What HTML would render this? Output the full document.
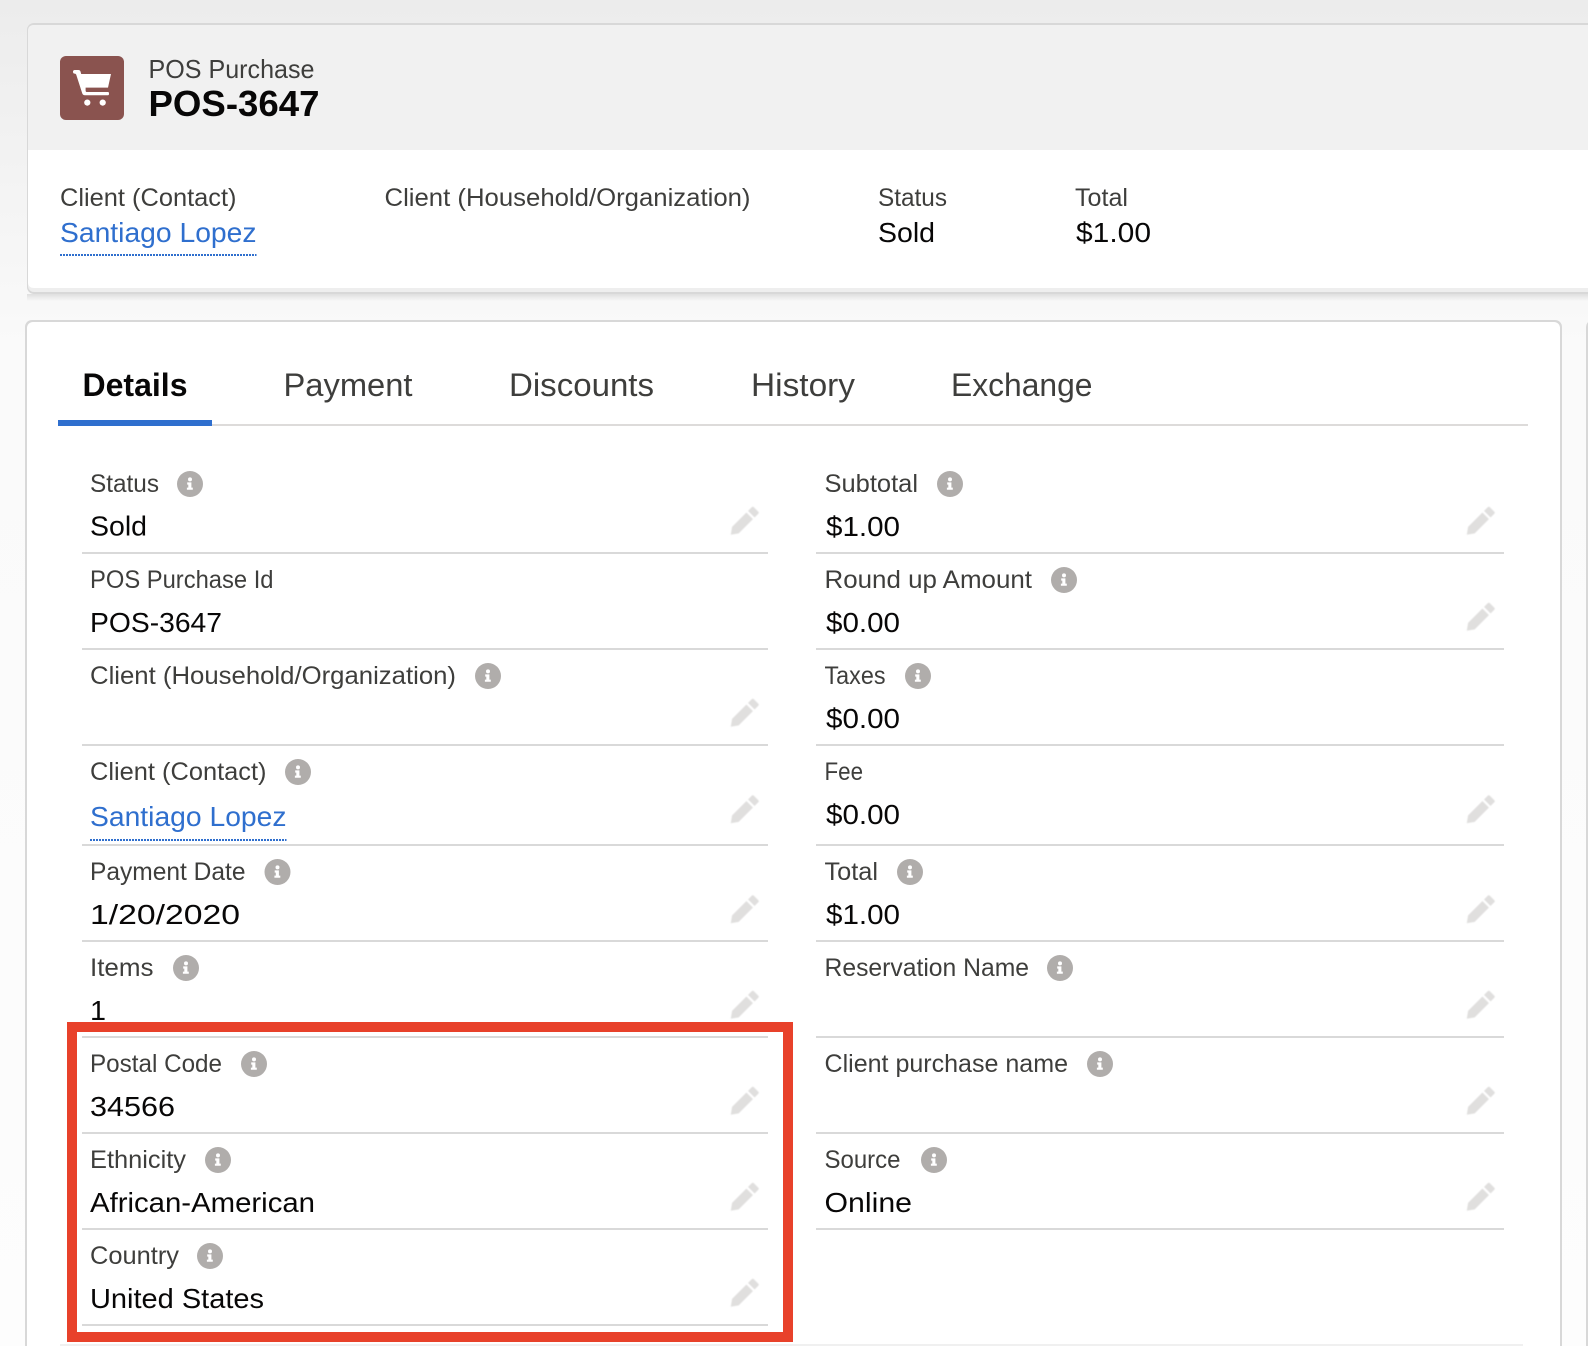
<!DOCTYPE html>
<html lang="en">
<head>
<meta charset="utf-8">
<title>POS Purchase POS-3647</title>
<style>
html,body{margin:0;padding:0;background:#fff;width:1588px;height:1346px;overflow:hidden}
svg{display:block}
text{font-family:"Liberation Sans",sans-serif;white-space:pre}
.l{font-size:25px;fill:#3e3e3c}
.v{font-size:28px;fill:#080707}
.a{font-size:28px;fill:#2f6fce}
.t{font-size:32px;fill:#3e3e3c}
.r{fill:#d9d9d9}
</style>
</head>
<body>
<svg width="1588" height="1346" viewBox="0 0 1588 1346" xmlns="http://www.w3.org/2000/svg">
<defs>
<linearGradient id="bg" x1="0" y1="0" x2="0" y2="1">
<stop offset="0" stop-color="#ececec"/><stop offset=".26" stop-color="#fafafa"/><stop offset="1" stop-color="#fdfdfd"/>
</linearGradient>
<linearGradient id="sh" x1="0" y1="0" x2="0" y2="1">
<stop offset="0" stop-color="#cfcfcf" stop-opacity=".6"/><stop offset="1" stop-color="#cfcfcf" stop-opacity="0"/>
</linearGradient>
<filter id="soft" x="-10%" y="-10%" width="120%" height="120%"><feGaussianBlur stdDeviation=".45"/></filter>
<g id="i">
<circle r="13" fill="#b0adab"/>
<circle cx="0" cy="-4.6" r="2" fill="#fff"/>
<path d="M-2.8 -1.6h4.2v5.2h1.4v2.2h-5.9v-2.2h1.4v-3h-1.1z" fill="#fff"/>
</g>
<g id="p" fill="#e0dfde" transform="rotate(-45) scale(.92)" filter="url(#soft)">
<path d="M-19.5 0l7-5h22v10h-22z"/>
<path d="M12 -5h5.700q1.600 0 1.600 1.600v6.800q0 1.600-1.600 1.600h-5.700z"/>
</g>
</defs>

<rect width="1588" height="1346" fill="url(#bg)"/>

<!-- header card -->
<rect x="27" y="294" width="1561" height="7" fill="url(#sh)"/>
<rect x="27" y="23" width="1600" height="271" rx="7" fill="#d8d8d8"/>
<rect x="28" y="25" width="1600" height="267" rx="6" fill="#eeeeee"/>
<path d="M28 31q0-6 6-6H1588v125H28z" fill="#f1f1f1"/>
<path d="M28 150h1560v138H34q-6 0-6-6z" fill="#fff"/>

<rect x="60" y="56" width="64" height="64" rx="6" fill="#8a534f"/>
<path d="M75.300 70h3.100q1.600 0 2.100 1.500l.7 2.500h29.800l-3 13.600H85.600v3q0 1.400 1.400 1.400h21q1 0 1 1.600t-1 1.600H85q-2.200 0-2.800-2l-6-18.600q-.4-1-1.500-1h-.2q-1.500 0-1.500-1.800t1.800-1.800z" fill="#fff"/>
<circle cx="87.300" cy="102.600" r="3.100" fill="#fff"/>
<circle cx="102.700" cy="102.600" r="3.100" fill="#fff"/>

<text x="148.500" y="78" font-size="26" fill="#3e3e3c" textLength="166" lengthAdjust="spacingAndGlyphs">POS Purchase</text>
<text x="148.500" y="116" font-size="36" font-weight="700" fill="#080707" textLength="171" lengthAdjust="spacingAndGlyphs">POS-3647</text>

<text class="l" x="60" y="206" textLength="176.500" lengthAdjust="spacingAndGlyphs">Client (Contact)</text>
<text class="l" x="384.500" y="206" textLength="366" lengthAdjust="spacingAndGlyphs">Client (Household/Organization)</text>
<text class="l" x="878" y="206" textLength="69" lengthAdjust="spacingAndGlyphs">Status</text>
<text class="l" x="1075" y="206" textLength="53" lengthAdjust="spacingAndGlyphs">Total</text>
<text class="a" x="60" y="242" textLength="196.500" lengthAdjust="spacingAndGlyphs">Santiago Lopez</text>
<line x1="60" y1="255" x2="256.500" y2="255" stroke="#2f6fce" stroke-width="2" stroke-dasharray="2 1"/>
<text class="v" x="878" y="242" textLength="57" lengthAdjust="spacingAndGlyphs">Sold</text>
<text class="v" x="1076" y="242" textLength="75" lengthAdjust="spacingAndGlyphs">$1.00</text>

<!-- main panel -->
<rect x="25" y="320" width="1537" height="1040" rx="7" fill="#d8d8d8"/>
<rect x="27" y="322" width="1533" height="1040" rx="6" fill="#fff"/>
<rect x="1586" y="321" width="10" height="1030" rx="6" fill="#d8d8d8"/>
<rect x="1588" y="323" width="10" height="1030" rx="6" fill="#fff"/>
<rect x="60" y="1344" width="1463" height="2" fill="#f0f0f0"/>

<!-- tabs -->
<rect x="58" y="424" width="1470" height="2" fill="#dddbda"/>
<rect x="58" y="420" width="154" height="6" fill="#2f6fce"/>
<text x="82.500" y="396" font-size="32" font-weight="700" fill="#080707" textLength="105" lengthAdjust="spacingAndGlyphs">Details</text>
<text class="t" x="283.500" y="396" textLength="129" lengthAdjust="spacingAndGlyphs">Payment</text>
<text class="t" x="509" y="396" textLength="145" lengthAdjust="spacingAndGlyphs">Discounts</text>
<text class="t" x="751" y="396" textLength="104" lengthAdjust="spacingAndGlyphs">History</text>
<text class="t" x="951" y="396" textLength="141.500" lengthAdjust="spacingAndGlyphs">Exchange</text>

<!-- rules -->
<g class="r">
<rect x="82" y="552" width="686" height="2"/><rect x="816" y="552" width="688" height="2"/>
<rect x="82" y="648" width="686" height="2"/><rect x="816" y="648" width="688" height="2"/>
<rect x="82" y="744" width="686" height="2"/><rect x="816" y="744" width="688" height="2"/>
<rect x="82" y="844" width="686" height="2"/><rect x="816" y="844" width="688" height="2"/>
<rect x="82" y="940" width="686" height="2"/><rect x="816" y="940" width="688" height="2"/>
<rect x="82" y="1036" width="686" height="2"/><rect x="816" y="1036" width="688" height="2"/>
<rect x="82" y="1132" width="686" height="2"/><rect x="816" y="1132" width="688" height="2"/>
<rect x="82" y="1228" width="686" height="2"/><rect x="816" y="1228" width="688" height="2"/>
<rect x="82" y="1324" width="686" height="2"/>
</g>

<!-- left column -->
<text class="l" x="90" y="492" textLength="69" lengthAdjust="spacingAndGlyphs">Status</text>
<use href="#i" x="190" y="484"/>
<text class="v" x="90" y="535.500" textLength="57" lengthAdjust="spacingAndGlyphs">Sold</text>

<text class="l" x="90" y="588" textLength="183.500" lengthAdjust="spacingAndGlyphs">POS Purchase Id</text>
<text class="v" x="90" y="632" textLength="132" lengthAdjust="spacingAndGlyphs">POS-3647</text>

<text class="l" x="90" y="684" textLength="366" lengthAdjust="spacingAndGlyphs">Client (Household/Organization)</text>
<use href="#i" x="488" y="676"/>

<text class="l" x="90" y="780" textLength="176.500" lengthAdjust="spacingAndGlyphs">Client (Contact)</text>
<use href="#i" x="298" y="772"/>
<text class="a" x="90" y="826" textLength="196.500" lengthAdjust="spacingAndGlyphs">Santiago Lopez</text>
<line x1="90" y1="840" x2="286.500" y2="840" stroke="#2f6fce" stroke-width="2" stroke-dasharray="2 1"/>

<text class="l" x="90" y="880" textLength="155.500" lengthAdjust="spacingAndGlyphs">Payment Date</text>
<use href="#i" x="277.500" y="872"/>
<text class="v" x="90" y="924" textLength="150" lengthAdjust="spacingAndGlyphs">1/20/2020</text>

<text class="l" x="90" y="976" textLength="63.500" lengthAdjust="spacingAndGlyphs">Items</text>
<use href="#i" x="186" y="968"/>
<text class="v" x="90" y="1020" textLength="16" lengthAdjust="spacingAndGlyphs">1</text>

<text class="l" x="90" y="1072" textLength="132" lengthAdjust="spacingAndGlyphs">Postal Code</text>
<use href="#i" x="254" y="1064"/>
<text class="v" x="90" y="1116" textLength="85" lengthAdjust="spacingAndGlyphs">34566</text>

<text class="l" x="90" y="1168" textLength="96" lengthAdjust="spacingAndGlyphs">Ethnicity</text>
<use href="#i" x="218" y="1160"/>
<text class="v" x="90" y="1212" textLength="225" lengthAdjust="spacingAndGlyphs">African-American</text>

<text class="l" x="90" y="1264" textLength="89" lengthAdjust="spacingAndGlyphs">Country</text>
<use href="#i" x="210" y="1256"/>
<text class="v" x="90" y="1308" textLength="174" lengthAdjust="spacingAndGlyphs">United States</text>

<!-- right column -->
<text class="l" x="824.500" y="492" textLength="93.500" lengthAdjust="spacingAndGlyphs">Subtotal</text>
<use href="#i" x="950" y="484"/>
<text class="v" x="826" y="536" textLength="74" lengthAdjust="spacingAndGlyphs">$1.00</text>

<text class="l" x="824.500" y="588" textLength="207.500" lengthAdjust="spacingAndGlyphs">Round up Amount</text>
<use href="#i" x="1064" y="580"/>
<text class="v" x="826" y="632" textLength="74" lengthAdjust="spacingAndGlyphs">$0.00</text>

<text class="l" x="824.500" y="684" textLength="61" lengthAdjust="spacingAndGlyphs">Taxes</text>
<use href="#i" x="918" y="676"/>
<text class="v" x="826" y="728" textLength="74" lengthAdjust="spacingAndGlyphs">$0.00</text>

<text class="l" x="824.500" y="780" textLength="38.500" lengthAdjust="spacingAndGlyphs">Fee</text>
<text class="v" x="826" y="824" textLength="74" lengthAdjust="spacingAndGlyphs">$0.00</text>

<text class="l" x="824.500" y="880" textLength="53.500" lengthAdjust="spacingAndGlyphs">Total</text>
<use href="#i" x="910" y="872"/>
<text class="v" x="826" y="924" textLength="74" lengthAdjust="spacingAndGlyphs">$1.00</text>

<text class="l" x="824.500" y="976" textLength="204.500" lengthAdjust="spacingAndGlyphs">Reservation Name</text>
<use href="#i" x="1060" y="968"/>

<text class="l" x="824.500" y="1072" textLength="243.500" lengthAdjust="spacingAndGlyphs">Client purchase name</text>
<use href="#i" x="1100" y="1064"/>

<text class="l" x="824.500" y="1168" textLength="76" lengthAdjust="spacingAndGlyphs">Source</text>
<use href="#i" x="934" y="1160"/>
<text class="v" x="824.500" y="1212" textLength="87.500" lengthAdjust="spacingAndGlyphs">Online</text>

<!-- pencils -->
<use href="#p" x="743.500" y="522"/>
<use href="#p" x="743.500" y="714"/>
<use href="#p" x="743.500" y="810.500"/>
<use href="#p" x="743.500" y="910.500"/>
<use href="#p" x="743.500" y="1006"/>
<use href="#p" x="743.500" y="1102"/>
<use href="#p" x="743.500" y="1198"/>
<use href="#p" x="743.500" y="1294"/>
<use href="#p" x="1479.500" y="522"/>
<use href="#p" x="1479.500" y="618"/>
<use href="#p" x="1479.500" y="810.500"/>
<use href="#p" x="1479.500" y="910.500"/>
<use href="#p" x="1479.500" y="1006"/>
<use href="#p" x="1479.500" y="1102"/>
<use href="#p" x="1479.500" y="1198"/>

<!-- red highlight -->
<rect x="72" y="1027" width="716" height="310" fill="none" stroke="#e8412a" stroke-width="10"/>
</svg>
</body>
</html>
